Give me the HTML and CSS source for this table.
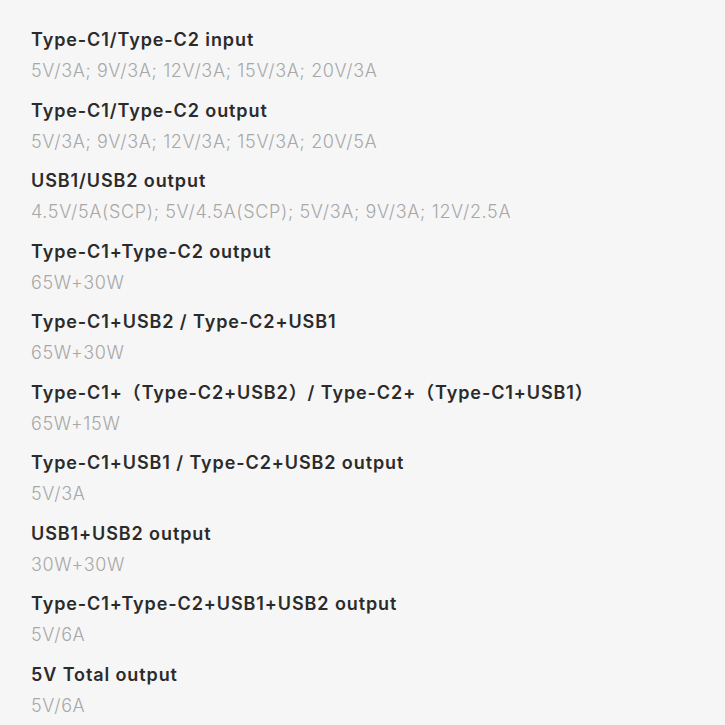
FILE: index.html
```html
<!DOCTYPE html>
<html lang="en">
  <head>
    <meta name="viewport" content="width=device-width, initial-scale=1" />
    <title>Specs</title>
    <link rel="stylesheet" href="styles.css">
  </head>
  <body>
    <dl class="spec-list">
      <div class="spec-item">
        <dt class="spec-name">Type-C1/Type-C2 input</dt>
        <dd class="spec-value">5V/3A; 9V/3A; 12V/3A; 15V/3A; 20V/3A</dd>
      </div>
      <div class="spec-item">
        <dt class="spec-name">Type-C1/Type-C2 output</dt>
        <dd class="spec-value">5V/3A; 9V/3A; 12V/3A; 15V/3A; 20V/5A</dd>
      </div>
      <div class="spec-item">
        <dt class="spec-name">USB1/USB2 output</dt>
        <dd class="spec-value">4.5V/5A(SCP); 5V/4.5A(SCP); 5V/3A; 9V/3A; 12V/2.5A</dd>
      </div>
      <div class="spec-item">
        <dt class="spec-name">Type-C1+Type-C2 output</dt>
        <dd class="spec-value">65W+30W</dd>
      </div>
      <div class="spec-item">
        <dt class="spec-name">Type-C1+USB2 / Type-C2+USB1</dt>
        <dd class="spec-value">65W+30W</dd>
      </div>
      <div class="spec-item">
        <dt class="spec-name">Type-C1+（Type-C2+USB2）/ Type-C2+（Type-C1+USB1）</dt>
        <dd class="spec-value">65W+15W</dd>
      </div>
      <div class="spec-item">
        <dt class="spec-name">Type-C1+USB1 / Type-C2+USB2 output</dt>
        <dd class="spec-value">5V/3A</dd>
      </div>
      <div class="spec-item">
        <dt class="spec-name">USB1+USB2 output</dt>
        <dd class="spec-value">30W+30W</dd>
      </div>
      <div class="spec-item">
        <dt class="spec-name">Type-C1+Type-C2+USB1+USB2 output</dt>
        <dd class="spec-value">5V/6A</dd>
      </div>
      <div class="spec-item">
        <dt class="spec-name">5V Total output</dt>
        <dd class="spec-value">5V/6A</dd>
      </div>
    </dl>
  </body>
</html>
```

FILE: styles.css
```css
html, body {
    margin: 0;
    background-color: #f6f6f6;
}
body {
    font-family: Inter, "Noto Sans CJK SC", sans-serif;
}
.spec-list {
    margin: 0;
    padding: 24px 31px 0;
    display: flex;
    flex-direction: column;
    gap: 7.5px;
}
.spec-item {
    display: flex;
    flex-direction: column;
}
.spec-name {
    font-size: 18px;
    font-weight: 600;
    line-height: 31px;
    letter-spacing: 0.9px;
    color: #2b2b2b;
}
.spec-value {
    margin: 0;
    font-size: 18px;
    font-weight: 300;
    line-height: 32px;
    letter-spacing: 0.65px;
    color: #a8a8a8;
}
```
